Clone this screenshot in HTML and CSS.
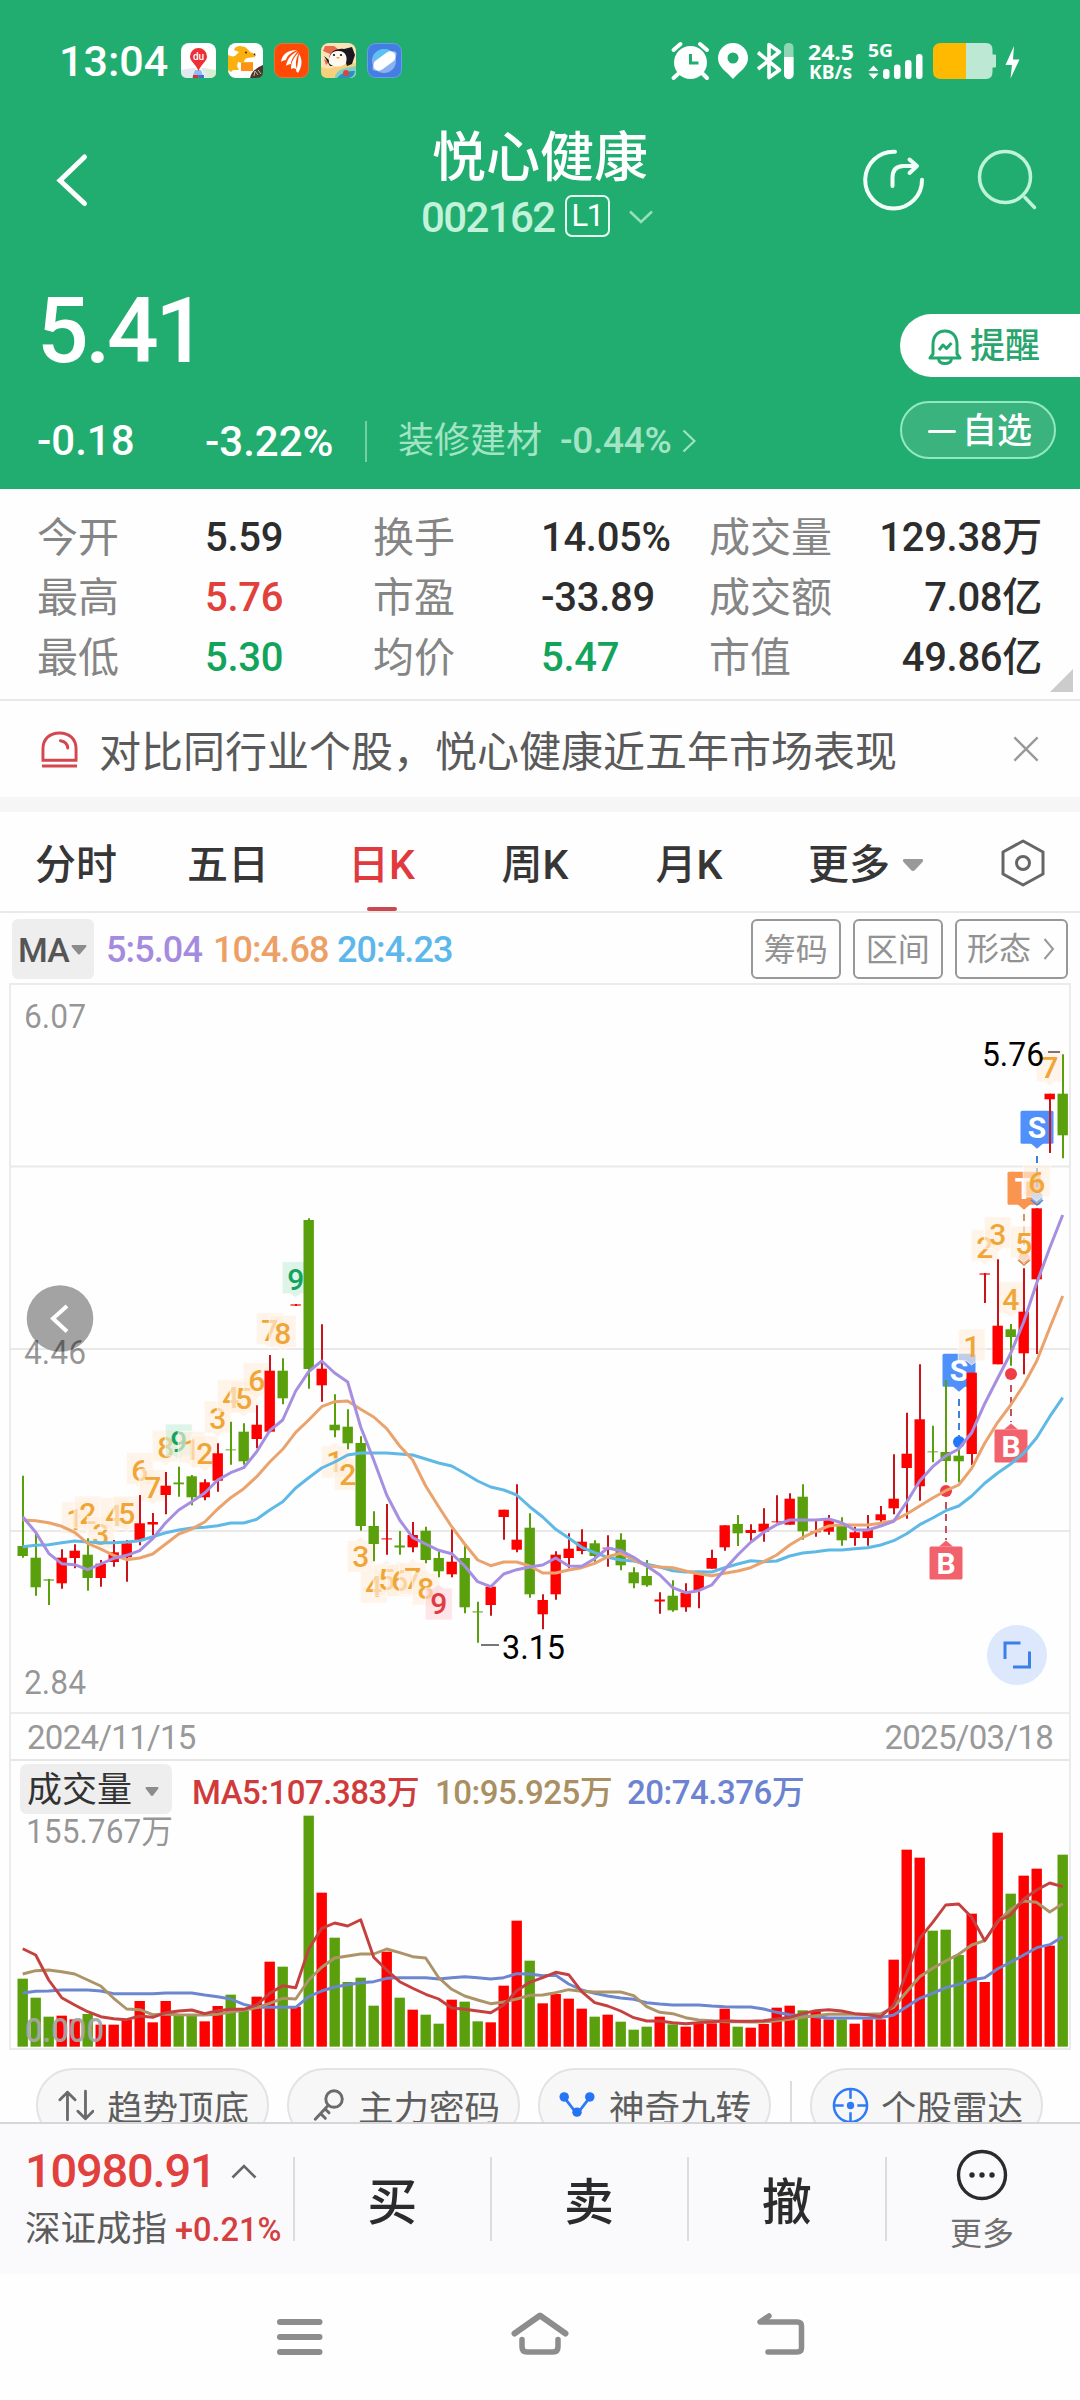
FILE: index.html
```html
<!DOCTYPE html>
<html lang="zh-CN">
<head>
<meta charset="utf-8">
<title>悦心健康 002162</title>
<link rel="stylesheet" href="styles.css">
</head>
<body>
<div class="screen">
  <header class="hero">
    <div class="status">
      <span class="clock">13:04</span>
      <div class="apps">
        <svg class="app" viewBox="0 0 35 35"><rect width="35" height="35" rx="8" fill="#fff"/><path d="M0 27l12-2h11l12 2v2q0 6-7 6H7q-7 0-7-6z" fill="#dfe9ee"/><path d="M24 26l11 1v2q0 6-7 6z" fill="#d7eed0"/><path d="M15 25h5l4 10H11z" fill="#fff"/><path d="M14 27h6l3 8H11z" fill="#8ec0ef"/><path d="M12 32h5.500v3H12z" fill="#d8333c"/><path d="M17.500 32H23v3h-5.500z" fill="#3f6fd0"/><path d="M17.500 5a8.500 8.500 0 0 1 8.500 8.500c0 5-5.500 7-8.500 14.500C14.500 20.500 9 18.500 9 13.500A8.500 8.500 0 0 1 17.500 5z" fill="#ee2f35"/><text class="du" x="17.500" y="17" text-anchor="middle">du</text></svg>
        <svg class="app" viewBox="0 0 35 35"><rect width="35" height="35" rx="8" fill="#fff"/><path d="M0 12c4 2 7 2 9-1l2-2-5-2c1-3 3-4 6-4l5 1c2 2 4 3 5 5l5 2v3l-8 1c-2 1-3 2-3 4h9v2h-7l-8-2-1 4 2 4H5l-2 2-3-2z" fill="#fbb10d"/><path d="M13 20h12v8H13z" fill="#ff9216"/><circle cx="18" cy="9.500" r="1" fill="#513"/><path d="M25.500 11.500l1.500-1.500.5 3z" fill="#322"/><path d="M35 22v7q0 6-7 6h-6q2-9 13-13z" fill="#4a362a"/><path d="M26 33l1-5 3 4M30 27l3 4" stroke="#cbb9a6" fill="none"/></svg>
        <svg class="app" viewBox="0 0 35 35"><rect x=".5" y=".5" width="34" height="34" rx="8" fill="#ff4a05" stroke="#e8762f"/><path d="M7 19c1-8 7-12 16-12-7 3-10 6-11 10-2 0-4 1-5 2zM12 23c1-7 5-12 12-15-5 6-7 9-7 13-2 0-4 1-5 2zM17 26c0-7 3-12 8-17-3 7-4 11-2 18-2-2-4-2-6-1zM22 28c2-6 2-12 3-17 4 6 3 13-1 19z" fill="#fff"/></svg>
        <svg class="app" viewBox="0 0 35 35"><rect width="35" height="35" rx="8" fill="#fbe3b5"/><path d="M4 3h9l4 3-8 5-7-3zM3 16l5 3-3 3z" fill="#ea6a4c"/><path d="M0 24q10 4 16-2l19-2v9q0 6-7 6H7q-7 0-7-6z" fill="#f7d07c"/><path d="M14 33c4-9 13-8 21-10v6q0 6-7 6H14z" fill="#7fd0c8"/><path d="M16 35c5-6 11-7 18-7q-1 7-7 7z" fill="#2c8fc0"/><path d="M3 13l5 4c0-9 8-12 15-11l8-2 3 8-3 9-5 2-2-6-5 6H9z" fill="#1b1820"/><path d="M8 20c-1-7 3-13 10-12 6 0 9 5 7 12-4 5-13 5-17 0z" fill="#fff8ee"/><circle cx="13" cy="12" r="1.100" fill="#111"/><circle cx="20" cy="12" r="1.100" fill="#111"/><path d="M15 14h4l-2 2z" fill="#f59a2c"/><circle cx="25" cy="30" r="3" fill="#e0433d"/></svg>
        <svg class="app" viewBox="0 0 35 35"><rect x=".5" y=".5" width="34" height="34" rx="8" fill="#437fe3" stroke="#6c9de8"/><circle cx="17" cy="18" r="12" fill="#8db0ee"/><path d="M6 17a11.500 11.500 0 0 1 20-7z" fill="#58c2f5"/><ellipse cx="17.500" cy="18" rx="14.500" ry="5.500" transform="rotate(-37 17.500 18)" fill="#9dbcf2"/><rect x="5" y="12.500" width="25" height="11" rx="5.500" transform="rotate(-37 17.500 18)" fill="#fff"/></svg>
      </div>
      <svg class="indicators" viewBox="670 40 352 42" fill="#fff">
        <circle cx="690.500" cy="62.500" r="16.500"/><path d="M673.500 50l7-6M700 44l7 6M678 74l-4.500 4M703 74l4 4" stroke="#fff" stroke-width="4" stroke-linecap="round"/><path d="M690.500 54v9h8" fill="none" stroke="#22ad70" stroke-width="3"/>
        <path fill-rule="evenodd" d="M733 43a15 15 0 0 1 15 15c0 9-8 13-15 21-7-8-15-12-15-21a15 15 0 0 1 15-15zm0 9.500a5.500 5.500 0 1 0 0 11 5.500 5.500 0 0 0 0-11z"/>
        <path d="M758 52.500L779.500 70 769 77.500V44.500L779.500 52 758 69" fill="none" stroke="#fff" stroke-width="3.600" stroke-linejoin="round"/>
        <rect x="784" y="43" width="9.500" height="36" rx="4.500" fill="#8fd6b6"/><path d="M784 57h9.500v17.500a4.750 4.750 0 0 1-9.500 0z"/>
        <text class="net" x="808" y="59.500" font-size="22" textLength="46" lengthAdjust="spacingAndGlyphs">24.5</text>
        <text class="net" x="809" y="79" font-size="20" textLength="43" lengthAdjust="spacingAndGlyphs">KB/s</text>
        <text class="net" x="868" y="57" font-size="18.500" textLength="25" lengthAdjust="spacingAndGlyphs">5G</text>
        <path d="M873.500 65.500l5 5.500h-10zM873.500 79l5-5.500h-10z"/>
        <rect x="883" y="69" width="6.500" height="10" rx="3"/><rect x="894" y="64.500" width="6.500" height="14.500" rx="3"/><rect x="905" y="60" width="6.500" height="19" rx="3"/><rect x="916" y="54" width="6.500" height="25" rx="3"/>
        <path d="M966 43h20q6.500 0 6.500 7v4.500h2.500q1 0 1 1v11q0 1-1 1h-2.500V72q0 7-6.500 7h-20z" fill="#bde8d4"/><path d="M966 43v36h-25q-8 0-8-8V51q0-8 8-8z" fill="#ffb900"/>
        <path d="M1014 46l-8.500 19h6.500l-1.500 13.500 9-19h-6.500z"/>
      </svg>
    </div>

    <div class="titlebar">
      <svg class="back" viewBox="0 0 60 119" fill="none"><path d="M34.500 36L10 59.500 34.500 82.500" stroke="#fff" stroke-width="5" stroke-linecap="round"/></svg>
      <div class="title">
        <h1>悦心健康</h1>
        <div class="code"><span>002162</span><b>L1</b><svg viewBox="0 0 24 14" fill="none"><path d="M1 1.500l11 10.500L23 1.500" stroke="#96dfbd" stroke-width="2.500"/></svg></div>
      </div>
      <svg class="tools" viewBox="860 121 180 119" fill="none" stroke-linecap="round" stroke-linejoin="round"><path d="M895 151.700a28.400 28.400 0 1 0 27 28" stroke="#f2fff9" stroke-width="4"/><path d="M892.500 186v-8q0-12 11-12h13M909.500 159.500l7.500 6.500-7.500 7" stroke="#f2fff9" stroke-width="4"/><circle cx="1005" cy="177" r="25.500" stroke="#bff3d9" stroke-width="3.500"/><path d="M1025 197.500l9.500 10" stroke="#bff3d9" stroke-width="3.500"/></svg>
    </div>

    <div class="quote">
      <div class="quote-main">
        <div class="price">5.41</div>
        <div class="change">
          <span class="diff">-0.18</span><span class="pct">-3.22%</span>
          <span class="sector">装修建材</span><span class="sector-pct">-0.44%</span>
          <svg viewBox="0 0 14 24" fill="none"><path d="M1.500 1.500L12.500 12 1.500 22.500" stroke="#9fe3c3" stroke-width="2.200"/></svg>
        </div>
      </div>
      <div class="quote-side">
        <div class="alert"><svg viewBox="0 0 34 36" fill="none" stroke="#22a86c" stroke-width="3" stroke-linejoin="round"><path d="M5 25V15.500C5 7 10 2 17 2s12 5 12 13.500V25l3 4H2z"/><path d="M10.500 30c1 6 12 6 13 0" /><path d="M11 21l4-5 3.500 3.500 5-5.500"/></svg>提醒</div>
        <div class="fav"><i></i>自选</div>
      </div>
    </div>
  </header>

  <section class="stats">
    <span class="k">今开</span><span>5.59</span><span class="k">换手</span><span class="wide">14.05%</span><span class="k">成交量</span><span class="r">129.38万</span>
    <span class="k">最高</span><span class="up">5.76</span><span class="k">市盈</span><span>-33.89</span><span class="k">成交额</span><span class="r">7.08亿</span>
    <span class="k">最低</span><span class="down">5.30</span><span class="k">均价</span><span class="down">5.47</span><span class="k">市值</span><span class="r">49.86亿</span>
    <i class="corner"></i>
  </section>

  <section class="notice">
    <svg class="siren" viewBox="0 0 38 38" fill="none" stroke="#d4474f" stroke-width="3"><path d="M2 30V18.500C2 8 9 2 19 2s17 6 17 16.500V30z"/><path d="M20 10q7 1 7.500 7.500" stroke-linecap="round"/><path d="M1 36h36"/></svg>
    <p>对比同行业个股，悦心健康近五年市场表现</p>
    <svg class="close" viewBox="0 0 28 28" fill="none"><path d="M1.500 1.500l25 25M26.500 1.500l-25 25" stroke="#999" stroke-width="2.500"/></svg>
  </section>

  <nav class="tabs">
    <span>分时</span><span>五日</span><span class="on">日K</span><span>周K</span><span>月K</span>
    <span>更多<svg class="tri" viewBox="0 0 22 14"><path d="M2 1h18q2 1 .5 3l-7.500 8q-2 2-4 0L1.500 4Q0 2 2 1z" fill="#999"/></svg></span>
    <span class="gear"><svg viewBox="0 0 44 48" fill="none" stroke="#666" stroke-width="3"><path d="M22 2l20 11v22L22 46 2 35V13z" stroke-linejoin="round"/><circle cx="22" cy="24" r="6.500"/></svg></span>
  </nav>

  <div class="mabar">
    <span class="ma">MA<svg viewBox="0 0 16 10"><path d="M1 0h14q1 1 0 2L9 9q-1 1-2 0L1 2Q0 1 1 0z" fill="#8c8c8c"/></svg></span>
    <span class="m5">5:5.04</span><span class="m10">10:4.68</span><span class="m20">20:4.23</span>
    <span class="box first">筹码</span><span class="box">区间</span><span class="box last">形态<svg viewBox="0 0 12 22" fill="none"><path d="M1.500 1L10 11 1.500 21" stroke="#999" stroke-width="2"/></svg></span>
  </div>

  <div class="frame">
    <svg class="kline" id="kline" viewBox="11 985 1058 727">
      <path d="M0 1166.500H1080M0 1349H1080M0 1531H1080" stroke="#e9e9e9" stroke-width="2"/>
      <circle cx="60" cy="1318.500" r="33.300" fill="#a3a3a3"/><path d="M67 1306l-14 12.500 14 13" fill="none" stroke="#fff" stroke-width="4"/>
      <g class="axis"><text x="24" y="1027.500" textLength="62" lengthAdjust="spacingAndGlyphs">6.07</text><text x="24" y="1363.500" textLength="62" lengthAdjust="spacingAndGlyphs">4.46</text><text x="24" y="1693.500" textLength="62" lengthAdjust="spacingAndGlyphs">2.84</text></g>
      <g id="marks"></g><g id="candles"></g><g id="averages"></g>
      <path d="M1048 1052h12M481 1645h18" stroke="#777" stroke-width="2"/>
      <g class="extreme"><text x="982" y="1066" textLength="62" lengthAdjust="spacingAndGlyphs">5.76</text><text x="502" y="1659" textLength="63" lengthAdjust="spacingAndGlyphs">3.15</text></g>
      <circle cx="1017" cy="1655" r="30" fill="#dde8fd"/><path d="M1020.500 1643H1005v16M1029.500 1651.500V1667H1013" fill="none" stroke="#3b7fe8" stroke-width="3"/>
    </svg>
    <div class="dates"><span>2024/11/15</span><span>2025/03/18</span></div>
    <div class="volhead"><span class="pick">成交量<svg viewBox="0 0 14 9"><path d="M1 0h12q1 1 0 2L8 8.500q-1 .8-2 0L1 2Q0 1 1 0z" fill="#8c8c8c"/></svg></span><span class="v5">MA5:107.383万</span><span class="v10">10:95.925万</span><span class="v20">20:74.376万</span></div>
    <svg class="volume" id="volume" viewBox="11 1815 1058 233">
      <g class="axis"><text x="26" y="1842.500" textLength="147" lengthAdjust="spacingAndGlyphs">155.767万</text></g>
      <g id="bars"></g>
      <text class="zero" x="25" y="2041.500" textLength="79" lengthAdjust="spacingAndGlyphs">0.000</text>
      <g id="volumeAverages"></g>
    </svg>
  </div>

  <div class="features">
    <span class="chip"><svg viewBox="0 0 38 34" fill="none" stroke="#6b6b6b" stroke-width="3" stroke-linecap="round" stroke-linejoin="round"><path d="M10 32V3M2 11l8-8 8 8M29 2v29M21 23l8 8 8-8"/></svg>趋势顶底</span>
    <span class="chip c2"><svg viewBox="0 0 34 36" fill="none" stroke="#6b6b6b" stroke-width="3.200" stroke-linecap="round"><circle cx="22.500" cy="11" r="9"/><path d="M16 18L2 33M8 27l5 5M13 22l4 4"/></svg>主力密码</span>
    <span class="chip c3"><svg viewBox="0 0 38 34"><path d="M5 8l14 18L33 8" fill="none" stroke="#2f7bf5" stroke-width="3"/><g fill="#2474f5"><circle cx="5.500" cy="8" r="5"/><circle cx="32.500" cy="8" r="5"/><circle cx="19" cy="24" r="5"/></g></svg>神奇九转</span>
    <i class="sep"></i>
    <span class="chip c4"><svg viewBox="0 0 38 38" fill="none" stroke="#2f7bf5" stroke-width="2.600"><circle cx="19" cy="19" r="17"/><path d="M19 2v10M19 26v10M2 19h10M26 19h10"/><circle cx="19" cy="19" r="2.500" fill="#2f7bf5"/></svg>个股雷达</span>
  </div>

  <footer class="trade">
    <div class="index">
      <div class="val">10980.91<svg viewBox="0 0 26 16" fill="none"><path d="M1.500 14.500L13 3l11.500 11.500" stroke="#666" stroke-width="2.600"/></svg></div>
      <div class="name">深证成指<em>+0.21%</em></div>
    </div>
    <span class="act">买</span><span class="act">卖</span><span class="act">撤</span>
    <div class="more"><svg viewBox="0 0 52 52"><circle cx="26" cy="26" r="23.500" fill="none" stroke="#2b2b2b" stroke-width="3.400"/><circle cx="16" cy="26" r="2.700"/><circle cx="26" cy="26" r="2.700"/><circle cx="36" cy="26" r="2.700"/></svg>更多</div>
  </footer>

  <div class="sysnav">
    <svg viewBox="270 2300 540 65" fill="none" stroke="#8d8d8d" stroke-width="6" stroke-linecap="round" stroke-linejoin="round"><path d="M280 2322h39.500M280 2337h39.500M280 2352h39.500"/><path d="M514.500 2333.500L540 2315.500l25.500 18"/><path d="M522 2339.500V2347q0 5 5 5h26q5 0 5-5v-7.500" stroke-width="5.500"/><path d="M769 2316l-9 6H797q4.500 0 4.500 4v22q0 4-4.500 4h-29" stroke-width="5.500"/></svg>
  </div>
</div>
<script src="chart.js"></script>
</body>
</html>
```

FILE: styles.css
```css
* { box-sizing: border-box; }
body { margin: 0; background: #fefefe; font-family: Roboto, "Noto Sans CJK SC", sans-serif; color: #333; }
.screen { width: 1080px; height: 2400px; overflow: hidden; display: flex; flex-direction: column; background: #fefefe; }
svg { display: block; flex: none; }

.hero { height: 489px; background: #22ad70; color: #fff; }
.status { height: 121px; display: flex; align-items: center; padding-left: 58px; }
.clock { width: 123px; font-size: 43px; font-weight: 500; line-height: 60px; padding-left: 1px; }
.apps { display: flex; gap: 11.500px; width: 489px; }
.app { width: 35px; height: 35px; }
.du { font: 500 10px Roboto, sans-serif; fill: #fff; }
.indicators { width: 352px; height: 42px; }
.net { font-family: "Noto Sans", sans-serif; font-weight: 700; }

.titlebar { height: 125px; display: grid; grid-template-columns: 60px 1fr 180px; padding: 0 40px 0 50px; align-items: start; }
.back { width: 60px; height: 119px; }
.title { padding-top: 7px; display: flex; flex-direction: column; align-items: flex-start; margin-left: 310px; }
h1 { margin: 0 0 0 12px; font-size: 54px; font-weight: 500; line-height: 62px; }
.code { display: flex; align-items: center; height: 54px; font-size: 42px; letter-spacing: -1.600px; color: #c2f2da; font-weight: 500; }
.code span { width: 144.500px; padding-left: 1px; }
.code b { width: 45px; height: 42px; border: 2px solid #e6fff4; border-radius: 7px; font-size: 31px; line-height: 38px; font-weight: 400; text-align: center; color: #fff; margin: -3px 19px 0 0; }
.code svg { width: 24px; height: 14px; }
.tools { width: 180px; height: 119px; }

.quote { display: flex; justify-content: space-between; }
.quote-main { padding: 30px 0 0 37px; }
.price { font-size: 91px; font-weight: 500; line-height: 110px; letter-spacing: -3.500px; }
.change { display: flex; align-items: center; margin-top: 26px; height: 58px; font-size: 42px; line-height: 58px; font-weight: 500; }
.diff { width: 168px; }
.pct { width: 162px; height: 41px; line-height: 41px; border-right: 2px solid #76cfa4; }
.sector { font-size: 36px; font-weight: 400; color: #a3e4c5; width: 132px; padding-left: 31px; box-sizing: content-box; white-space: nowrap; flex: none; }
.sector-pct { font-size: 37px; color: #a3e4c5; width: 122px; margin-left: 30px; letter-spacing: -.3px; }
.change svg { width: 14px; height: 24px; }
.quote-side { width: 180px; padding-top: 68px; }
.alert { height: 63px; border-radius: 32px 0 0 32px; background: #fff; color: #2aa56d; font-size: 35px; line-height: 63px; display: flex; align-items: center; padding: 2px 0 0 28px; font-weight: 500; }
.alert svg { width: 34px; height: 36px; margin-right: 8px; }
.fav { margin-top: 24px; width: 156px; height: 58px; border: 2px solid #92e8c1; border-radius: 29px; background: #3bb37e; font-size: 35px; line-height: 54px; font-weight: 500; display: flex; align-items: center; padding: 3px 0 0 26px; }
.fav i { width: 28px; height: 3.500px; background: #fff; margin-right: 6px; border-radius: 2px; }

.stats { position: relative; height: 213px; border-bottom: 2px solid #e9e9e9; display: grid; grid-template-columns: 168px 168px 168px 168px 130px 1fr; grid-auto-rows: 60px; padding: 19px 38px 0 37px; font-size: 40px; font-weight: 500; line-height: 60px; letter-spacing: -.3px; color: #2d2d2d; white-space: nowrap; }
.stats .k { font-size: 41px; font-weight: 400; color: #858585; letter-spacing: 0; }
.stats .up { color: #e2413b; }
.stats .down { color: #12a35c; }
.stats .r { text-align: right; }
.corner { position: absolute; right: 7px; bottom: 7px; border-left: 23px solid transparent; border-bottom: 23px solid #ccc; }

.notice { height: 96px; display: flex; align-items: center; padding-left: 41px; }
.siren { width: 37px; height: 37px; margin-right: 21px; }
.notice p { margin: 0; font-size: 42px; line-height: 60px; width: 914px; color: #5a5a5a; padding-top: 7px; }
.close { width: 26px; height: 26px; }

.tabs { height: 116px; border-top: 15px solid #f6f6f6; border-bottom: 2px solid #e9e9e9; display: grid; grid-template-columns: 152px 152px 160px 142px 166px 188px 1fr; font-size: 41px; line-height: 104px; color: #363636; }
.tabs > span { display: flex; justify-content: center; align-items: center; height: 99px; padding-top: 7px; font-weight: 500; }
.tabs .on { color: #e03a3e; position: relative; padding-right: 5px; }
.on::after { content: ""; position: absolute; bottom: 0; left: 63px; width: 30px; height: 4px; border-radius: 2px; background: #cb4850; }
.tri { width: 22px; height: 14px; margin-left: 12px; }
.tabs .gear { padding: 2px 0 0 5px; }
.gear svg { width: 44px; height: 48px; }

.mabar { height: 70px; display: flex; align-items: center; padding: 1px 12px 0; font-size: 36px; font-weight: 500; letter-spacing: -.9px; }
.mabar > span { padding-top: 3px; }
.mabar .ma { width: 82px; height: 60px; background: #eee; border-radius: 6px; display: flex; align-items: center; padding: 2px 0 0 6px; font-size: 34px; color: #555; }
.ma svg { width: 16px; height: 10px; margin-left: 2px; }
.m5 { color: #a58be0; margin-left: 12px; width: 107px; }
.m10 { color: #eda065; width: 124px; }
.m20 { color: #5cb7ea; }
.mabar .box { height: 60px; width: 89.500px; border: 2px solid #989898; border-radius: 6px; font-size: 32px; font-weight: 400; line-height: 56px; text-align: center; color: #929292; margin-right: 12.500px; letter-spacing: 0; padding-top: 1px; }
.mabar .first { margin-left: auto; }
.mabar .last { width: 113px; margin-right: 0; display: flex; align-items: center; padding-left: 10px; }
.last svg { width: 12px; height: 22px; margin-left: 12px; }

.frame { width: 1062px; margin-left: 9px; border: 2px solid #ebebeb; }
.kline { width: 1058px; height: 727px; }
.dates { height: 49px; border-top: 2px solid #ebebeb; border-bottom: 2px solid #e6e6e6; display: flex; justify-content: space-between; padding: 2px 16px 0 16px; font-size: 33px; line-height: 44px; color: #999; letter-spacing: -.7px; }
.volhead { height: 54px; display: flex; align-items: center; padding: 2px 0 0 9px; font-size: 33px; font-weight: 500; white-space: nowrap; letter-spacing: -.5px; }
.volhead > span { padding-top: 2px; }
.volhead .pick { width: 152px; height: 50px; border-radius: 7px; background: #eee; color: #333; font-size: 35px; font-weight: 400; line-height: 50px; display: flex; align-items: center; padding: 4px 0 0 7px; letter-spacing: 0; }
.pick svg { width: 14px; height: 9px; margin-left: 13px; }
.v5 { color: #cf3b3b; margin-left: 20px; width: 243px; }
.v10 { color: #a98f62; width: 192px; }
.v20 { color: #6b83d0; }
.volume { width: 1058px; height: 233px; }
.axis text, .zero, .extreme text { font: 33px Roboto, "Noto Sans CJK SC", sans-serif; fill: #999; }
.axis text { fill: rgba(0, 0, 0, .42); }
.zero { font-weight: 500; fill: #a6a6a6; fill-opacity: .95; }
.extreme text { fill: #000; }
.digit { font: 500 30px Roboto, sans-serif; text-anchor: middle; }
.flag { font: 700 30px Roboto, sans-serif; text-anchor: middle; fill: #fff; }

.features { height: 72px; overflow: hidden; display: flex; align-items: flex-start; padding: 18px 0 0 36px; }
.chip { width: 233px; height: 74px; flex: none; border: 2px solid #e3e3e3; border-radius: 37px; background: #f7f7f7; display: flex; align-items: center; padding: 1px 0 0 20px; font-size: 35.500px; color: #5e5e5e; white-space: nowrap; margin-right: 18px; }
.chip svg { width: 36px; height: 33px; margin-right: 13px; }
.c2 { padding-left: 22px; }
.c2 svg { margin-right: 11px; }
.c3 { padding-left: 19px; margin-right: 19px; }
.c3 svg { margin-right: 14px; }
.sep { width: 2px; height: 50px; margin: 13px 18px 0 0; background: #ddd; }
.c4 svg { width: 37px; height: 37px; margin-right: 12px; }

.trade { height: 152px; border-top: 2px solid #d6d6d8; background: #fafafc; display: grid; grid-template-columns: 293px 196.500px 197px 198.500px 1fr; }
.index { padding: 20px 0 0 25px; white-space: nowrap; }
.val { font-size: 47px; font-weight: 500; line-height: 54px; letter-spacing: -1.200px; color: #e2403c; display: flex; align-items: center; }
.val svg { width: 26px; height: 16px; margin-left: 16px; }
.name { font-size: 35.500px; line-height: 58px; margin-top: 2px; color: #5c5c5c; }
.name em { font-style: normal; font-weight: 500; font-size: 32.500px; color: #d63f3f; margin-left: 8px; }
.act { height: 84px; margin-top: 33px; border-left: 2px solid #dcdcde; text-align: center; font-size: 50px; font-weight: 500; line-height: 92px; color: #2b2b2b; }
.more { display: flex; flex-direction: column; align-items: center; margin-top: 33px; height: 84px; border-left: 2px solid #dcdcde; font-size: 32px; line-height: 40px; color: #6f6f6f; white-space: nowrap; padding-right: 3px; }
.more svg { width: 52px; height: 52px; margin: -8px 0 13px; fill: #2b2b2b; }

.sysnav { height: 126px; padding: 26px 0 0 270px; background: #fefefe; }
.sysnav svg { width: 540px; height: 65px; }
```

FILE: chart.js
```js
const RED = '#fe0000', GREEN = '#5aa00c', WICK_UP = '#c8141a';
const STEP = 13, FIRST = 22.7;
const cx = i => FIRST + STEP * i;
const put = (id, html) => { document.getElementById(id).innerHTML = html; };

// direction, wick top, body top, body bottom, wick bottom
const candles = `G1475.7,1546,1556,1557.7 G1533,1557.7,1587.3,1595.7 g1579,1579,1581,1605 R1549.3,1557.7,1583.3,1588.7 R1544.3,1550.7,1558,1568.3
G1538.3,1554.7,1578,1590.7 R1560,1563.7,1578,1586.7 R1540,1552.3,1562,1566.7 R1540,1543.3,1557.3,1581.7 R1495,1523.3,1540,1545.3
R1513,1522,1524.5,1535 R1472,1485.7,1495,1514.3 G1466.7,1482.5,1484.3,1496.7 G1475,1476.3,1497.3,1505.3 R1479.3,1482.3,1497.3,1500.3
R1443.3,1453.3,1480.7,1491.7 g1421.7,1449,1450.5,1464.7 G1423.3,1431.7,1461.3,1464.7 R1405.3,1424.7,1439,1448.3 R1355,1370.7,1431.7,1432.3
G1358.3,1370.7,1398.3,1404.3 r1304,1304,1306,1306 G1218.3,1220,1369,1388.7 R1324.3,1368.7,1385.3,1401.7 G1394.3,1424.7,1430.3,1437.3
G1409.3,1426.7,1443.3,1449.3 G1436.3,1443,1526,1530.7 G1511.3,1526,1544,1561.3 r1504,1538,1539.7,1554.7 G1531,1545.5,1547.5,1554.7
R1522,1535,1547.3,1552.3 G1526.7,1530.7,1560,1563.3 G1551.7,1558,1571.3,1577.3 R1529.3,1561.7,1574.3,1577.3 G1545,1558,1607.3,1613.3
g1601.7,1611,1612.7,1642.7 R1586.7,1586.7,1605,1615.7 R1509.7,1509.7,1517,1539.7 R1484.3,1539.7,1549.7,1552.3 G1513.3,1527.7,1594.3,1597.7
R1594.3,1600,1614.3,1629.3 R1551.3,1554.7,1594.3,1599.7 R1533.3,1548.7,1558,1568.3 R1529.3,1541.7,1551,1554.3 G1540.3,1543.3,1556,1562.3
r1535.3,1547.5,1549,1566.7 G1533.3,1539.7,1565.3,1570.3 G1567.3,1572.3,1583.3,1588.3 G1560,1576,1585.3,1586.7 R1592.3,1599.5,1601.5,1613.7
G1580.3,1595.7,1610.3,1611.7 R1583.3,1592.7,1607.3,1611.7 R1574.3,1574.3,1590,1608.3 R1549.7,1558,1568.7,1568.7 R1525.3,1525.3,1547.3,1550.7
G1515,1524,1533.3,1546 R1524.3,1530,1533,1542.7 R1508.3,1523.7,1531.7,1541.7 r1495.3,1521,1522.5,1522.5 R1493.3,1498.7,1524.7,1524.7
G1484.3,1496.7,1531.3,1539.7 r1521,1531,1532.5,1536.7 R1515,1519,1531.7,1534.7 G1517.3,1526,1540.3,1545.7 R1526.7,1532.3,1538,1545.7
R1515,1530,1538,1545.7 R1506,1514.3,1520.3,1521.7 R1454.3,1498.7,1508.3,1514.3 R1412.7,1453.7,1468,1518.7 R1364.3,1419.3,1486.3,1500.7
g1425.7,1451,1452.5,1462.3 G1380,1452,1461,1482.3 G1446.7,1455.7,1461.3,1482.3 R1372.7,1372.7,1454,1465 r1273,1273,1275,1303
R1259.3,1325.7,1364.3,1364.3 G1324,1329.3,1337,1365.7 R1268.3,1311.7,1353.3,1374.3 R1208.3,1208.3,1279.3,1354 R1093.7,1093.7,1099.3,1153
G1054.3,1093.7,1135.3,1158.3`.split(/\s+/).map(s => ({ up: /r/i.test(s[0]), thin: /[rg]/.test(s[0]), v: s.slice(1).split(',').map(Number) }));

put('candles', candles.map((c, i) => {
  const [wt, bt, bb, wb] = c.v, x = cx(i), body = c.up ? RED : GREEN, wick = c.up ? WICK_UP : GREEN;
  return `<path d="M${x + .3} ${wt}V${wb}" stroke="${wick}" stroke-width="2"/><rect x="${x - 5.2}" y="${bt}" width="10.4" height="${bb - bt}" fill="${body}" fill-opacity="${c.thin ? .6 : 1}"/>`;
}).join(''));

const line = (pts, color, w) => `<polyline points="${pts.map((y, i) => cx(i).toFixed(1) + ',' + y.toFixed(1)).join(' ')}" fill="none" stroke="${color}" stroke-width="${w}" stroke-linejoin="round"/>`;

const ma5 = [1516.7,1532.3,1553.3,1563.7,1564.7,1569.7,1564,1558.3,1555.3,1550.7,1538.7,1522.7,1510,1501.7,1493,1480,1472.7,1467.7,1451.7,1430.7,1420,1391,1371.7,1361,1373,1382,1427,1460,1495,1520,1537.7,1544,1550.3,1553.7,1566,1581.7,1586.7,1574,1569.7,1567,1565,1558,1566,1566.3,1558.7,1548,1550.7,1557.3,1566,1574.7,1587.7,1592.7,1590.7,1585,1569.3,1555,1542.3,1532.3,1524.7,1520,1520,1520,1519,1522.7,1530,1530,1526,1521.3,1502,1481,1466.7,1456,1449,1432.7,1403.7,1378.3,1353.3,1322,1283,1248,1215];
const ma10 = [1520,1520.7,1522.7,1526.3,1532.3,1543.3,1549,1555.3,1559.7,1558,1554,1544,1534,1529,1522,1509,1497.7,1488.7,1476.7,1462,1449.3,1432.3,1420,1406.7,1401.7,1401,1409.3,1417,1428.7,1446,1460,1486,1506.7,1526.7,1544,1560,1565.7,1562,1562,1566,1573,1573,1570,1567.7,1563.3,1556.7,1553.3,1560,1566,1567,1567.7,1571,1573.7,1575.7,1573.3,1571,1567.7,1561.7,1555,1545,1537.3,1531.3,1526,1524.7,1525,1525,1523.3,1520.7,1514,1506,1498,1490.7,1485,1468.3,1443.3,1422.3,1405,1385,1361,1328,1296];
const ma20 = [1546.7,1545.3,1544.7,1542.7,1541,1542,1542.7,1542.7,1542,1540.7,1536.7,1532.7,1530,1528,1527.3,1525.7,1523,1523,1519.3,1510,1501.7,1488,1477.7,1468,1462,1455,1453,1453,1453,1454,1455,1459,1463,1466,1473.3,1481,1487,1490,1495,1506.7,1517,1529.3,1538,1547.3,1552.7,1557.3,1560,1561,1564.3,1567,1570.7,1572,1571.7,1572,1567.7,1564,1560.7,1561.7,1561,1556,1553,1551.7,1550,1550,1548.7,1547.7,1545,1540.7,1533.7,1524.7,1518,1510.7,1506,1496,1483.3,1473,1464,1453.3,1437.7,1416.7,1397.7];
put('averages', line(ma20, '#5fb9e6', 3) + line(ma10, '#eba36e', 3) + line(ma5, '#a68fe0', 3));

// nine-turn counters: candle index, digit, box top, tone, below the candle
const counters = [[4,1,1501.7],[5,2,1496],[6,3,1516.7],[7,4,1497.3],[8,5,1496],[9,6,1452.7],[10,7,1469.3],[11,8,1430],[12,9,1424,'g'],[13,1,1431.3],[14,2,1435.7],[15,3,1401],[16,4,1379.3],[17,5,1381],[18,6,1362.7],[19,7,1312.7],[20,8,1315.3],[21,9,1261.7,'g'],
[24,1,1446,'o',1],[25,2,1458.7,'o',1],[26,3,1540.5,'o',1],[27,4,1571,'o',1],[28,5,1564,'o',1],[29,6,1564.5,'o',1],[30,7,1562.5,'o',1],[31,8,1573,'o',1],[32,9,1588,'r',1],
[73,1,1329],[74,2,1229.3],[75,3,1216.7],[76,4,1281.7],[77,5,1226],[78,6,1165],[79,7,1050]];
const tones = { o: ['#ffeedd', '#f0a537'], g: ['#cdeedd', '#12a35c'], r: ['#fdd7da', '#e03b45'] };

function flag(x, top, ch, color, below) {
  const tip = below ? `M${x - 7} ${top}l7-6 7 6z` : `M${x - 7} ${top + 32}l7 6 7-6z`;
  return `<rect x="${x - 16.5}" y="${top}" width="33" height="33" rx="1.5" fill="${color}"/><path d="${tip}" fill="${color}"/><text class="flag" x="${x}" y="${top + 27.5}">${ch}</text>`;
}
const dash = (x, a, b, color) => `<path d="M${x} ${a}V${b}" stroke="${color}" stroke-width="2" stroke-dasharray="7 5"/>`;
const dot = (x, y, color) => `<circle cx="${x}" cy="${y}" r="6" fill="${color}"/>`;
const signals =
  flag(1024, 1171.7, 'T', '#f9954e') + dash(1024, 1214, 1250, '#e0905c') + `<circle cx="1024" cy="1258" r="5.5" fill="#f5b184"/><path d="M1018 1260l6 5 6-5" fill="none" stroke="#d98a55" stroke-width="1.500"/>` +
  flag(1037, 1110.7, 'S', '#4f90fb') + dash(1037, 1156, 1195, '#3f7fd8') + `<circle cx="1037" cy="1197" r="5.5" fill="#8fb4ee"/><path d="M1031 1200l6 5 6-5" fill="none" stroke="#4a86da" stroke-width="1.500"/>` +
  flag(959, 1353.7, 'S', '#4f90fb') + dash(959, 1399, 1436, '#3f7fd8') + dot(959, 1442, '#2377fa') +
  dot(946, 1491, '#f03c46') + dash(946, 1502, 1540, '#c4505a') + flag(946, 1546.5, 'B', '#f2626c', true) +
  dot(1011, 1374, '#f03c46') + dash(1011, 1385, 1422, '#c4505a') + flag(1011, 1429.5, 'B', '#f2626c', true);
put('marks', signals + counters.map(([i, n, top, tone = 'o', below]) => {
  const x = cx(i), [bg, fg] = tones[tone], a = x - 13.5, b = x + 13.5, y2 = top + 32;
  const d = below ? `M${a} ${top}H${x - 5}L${x} ${top - 4}L${x + 5} ${top}H${b}V${y2}H${a}z` : `M${a} ${top}H${b}V${y2}H${x + 5}L${x} ${y2 + 4}L${x - 5} ${y2}H${a}z`;
  return `<path d="${d}" fill="${bg}" fill-opacity=".65" stroke="#fff" stroke-opacity=".7"/><text class="digit" x="${x}" y="${top + (below ? 26 : 28.3)}" fill="${fg}">${n}</text>`;
}).join(''));

// volume levels, in thirds of a pixel below the pane's origin; the floor is at 1100
const FLOOR = 1100, level = v => 1680 + v / 3;
const vols = [896,953,1010,1007,1018,1002,1034,1034,1020,963,1027,963,1006,1008,1024,978,944,993,950,845,860,980,407,638,773,906,893,977,815,953,989,1004,1031,959,965,1024,1027,917,722,842,970,942,956,986,1010,1004,1025,1049,1040,1010,1033,1040,1032,1030,986,1040,1043,1032,983,977,991,995,1018,1018,1031,1018,1018,839,509,533,752,749,825,701,906,458,641,587,566,797,524];
put('bars', vols.map((v, i) => `<rect x="${cx(i) - 5.2}" y="${level(v)}" width="10.4" height="${(FLOOR - v) / 3}" fill="${candles[i].up ? RED : GREEN}"/>`).join(''));
const v5 = [806,825,900,953,975,995,1010,1016,1019,1008,1012,998,993,990,1001,992,988,988,975,940,917,923,808,745,729,738,719,832,870,905,925,943,957,984,988,993,998,975,932,907,893,877,884,935,968,978,993,1013,1023,1023,1028,1031,1028,1025,1022,1024,1024,1022,1017,1012,1001,992,989,993,1001,1004,1010,975,880,775,727,675,672,712,782,723,705,657,630,609,620];
const v10 = [882,872,870,875,882,900,918,955,987,989,1004,1002,1004,1005,1005,1003,996,991,983,970,955,957,900,862,834,828,822,822,807,818,830,834,893,928,948,960,971,966,957,946,945,938,929,934,936,936,936,947,980,997,1001,1013,1020,1022,1025,1025,1026,1026,1022,1018,1012,1007,1003,1002,1003,1003,1001,982,935,890,865,843,823,795,782,725,688,663,667,696,671];
const v20 = [939,934,933,930,930,930,933,941,941,941,941,939,939,939,945,950,957,973,982,982,982,982,950,933,921,914,908,905,895,893,893,893,897,893,890,893,897,893,881,882,887,886,912,930,940,948,954,958,968,972,975,975,975,978,980,981,981,987,997,1004,1007,1010,1014,1014,1014,1014,1013,1005,980,955,940,923,913,900,893,866,847,825,803,794,770];
put('volumeAverages', line(v20.map(level), '#6d86d0', 2.9) + line(v10.map(level), '#ad9468', 2.9) + line(v5.map(level), '#c5413f', 2.9));
```
